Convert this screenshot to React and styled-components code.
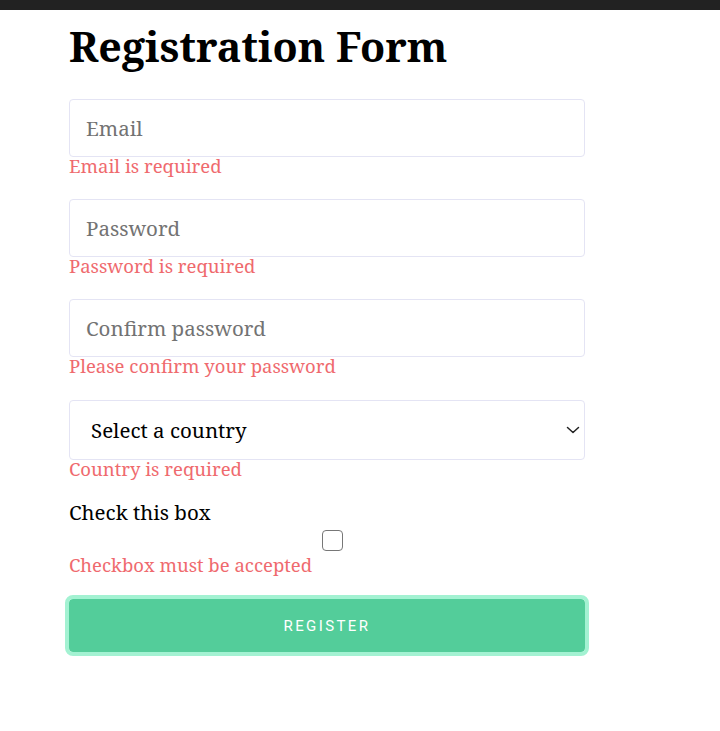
import React from "react";
import styled, {createGlobalStyle} from "styled-components";

const GlobalStyle = createGlobalStyle`
  body {
    margin: 0;
    background: #fff;
    font-family: "Noto Serif", "Droid Serif", "DejaVu Serif", serif;
  }
`;

const TopBar = styled.div`
  height: 10px;
  background: #222;
`;

const Container = styled.div`
  width: 516px;
  margin-left: 69px;
`;

const Title = styled.h1`
  margin: 12px 0 29px;
  font-size: 41.2px;
  font-weight: 700;
  line-height: 48px;
  color: #000;
`;

const Form = styled.form`
  display: flex;
  flex-direction: column;
`;

const Field = styled.div`
  display: flex;
  flex-direction: column;
  align-items: flex-start;
  margin-bottom: ${({gap}) => gap ?? 23}px;
`;

const Input = styled.input`
  box-sizing: border-box;
  height: 58px;
  width: 100%;
  padding: 0 16px;
  border: 1px solid #e4e4f4;
  border-radius: 4px;
  font-family: inherit;
  font-size: 20.5px;
  color: #222;
  outline: none;
  &::placeholder {
    color: #737373;
  }
`;

const SelectWrap = styled.div`
  position: relative;
  width: 100%;
  color: #222;

  svg {
    position: absolute;
    right: 5px;
    top: 26px;
    pointer-events: none;
  }
`;

const Select = styled.select`
  appearance: none;
  box-sizing: border-box;
  height: 60px;
  width: 100%;
  padding: 0 30px 0 21px;
  border: 1px solid #e4e4f4;
  border-radius: 4px;
  background: #fff;
  font-family: inherit;
  font-size: 20.5px;
  color: #000;
  outline: none;
`;

const Error = styled.span`
  margin-top: -1px;
  font-size: 18.5px;
  line-height: 20px;
  color: #ef6a6e;
`;

const Label = styled.label`
  font-size: 20.5px;
  line-height: 28px;
  color: #000;
`;

const Checkbox = styled.input`
  appearance: none;
  box-sizing: border-box;
  width: 21px;
  height: 21px;
  margin: 4px 0 5px 253px;
  border: 1.5px solid #777;
  border-radius: 4px;
  background: #fff;
  cursor: pointer;

  &:checked {
    background: #53cd9a;
    border-color: #53cd9a;
  }
`;

const Button = styled.button`
  box-sizing: border-box;
  height: 61px;
  width: calc(100% + 8px);
  margin: 0 0 0 -4px;
  border: 4px solid #a3f2d2;
  border-radius: 8px;
  background: #53cd9a;
  background-clip: padding-box;
  color: #fff;
  font-family: Roboto, "Liberation Sans", sans-serif;
  font-size: 15px;
  letter-spacing: 2.4px;
  text-transform: uppercase;
  cursor: pointer;
`;

const Chevron = () => (
    <svg width="14" height="8" viewBox="0 0 14 8" fill="none">
        <polyline points="1.5,1.5 7,6.5 12.5,1.5" stroke="currentColor" strokeWidth="1.5"
                  strokeLinecap="round" strokeLinejoin="round"/>
    </svg>
);

const App = () => (
    <>
        <GlobalStyle/>
        <TopBar/>
        <Container>
            <Title>Registration Form</Title>
            <Form onSubmit={e => e.preventDefault()}>
                <Field>
                    <Input type="email" placeholder="Email"/>
                    <Error>Email is required</Error>
                </Field>
                <Field>
                    <Input type="password" placeholder="Password"/>
                    <Error>Password is required</Error>
                </Field>
                <Field gap={24}>
                    <Input type="password" placeholder="Confirm password"/>
                    <Error>Please confirm your password</Error>
                </Field>
                <Field gap={19}>
                    <SelectWrap>
                        <Select defaultValue="">
                            <option value="">Select a country</option>
                            <option value="us">United States</option>
                            <option value="uk">United Kingdom</option>
                        </Select>
                        <Chevron/>
                    </SelectWrap>
                    <Error>Country is required</Error>
                </Field>
                <Field gap={20}>
                    <Label htmlFor="accept">Check this box</Label>
                    <Checkbox id="accept" type="checkbox"/>
                    <Error>Checkbox must be accepted</Error>
                </Field>
                <Button type="submit">Register</Button>
            </Form>
        </Container>
    </>
);

export default App;
